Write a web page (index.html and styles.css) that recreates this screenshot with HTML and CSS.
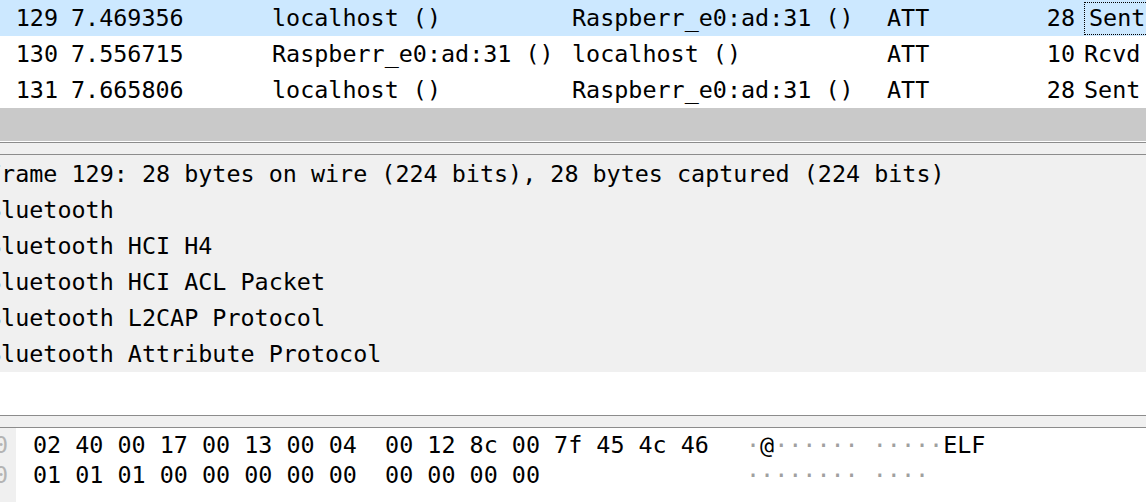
FILE: index.html
```
<!DOCTYPE html>
<html>
<head>
<meta charset="utf-8">
<link rel="stylesheet" href="styles.css">
</head>
<body>
<div class="app">
  <div class="packets">
    <div class="prow selected">
      <span class="c-no">129</span><span class="c-time">7.469356</span><span class="c-src">localhost ()</span><span class="c-dst">Raspberr_e0:ad:31 ()</span><span class="c-proto">ATT</span><span class="c-len">28</span><span class="c-info"><span class="focus">Sent Write Request, Handle: 0x0013</span></span>
    </div>
    <div class="prow">
      <span class="c-no">130</span><span class="c-time">7.556715</span><span class="c-src">Raspberr_e0:ad:31 ()</span><span class="c-dst">localhost ()</span><span class="c-proto">ATT</span><span class="c-len">10</span><span class="c-info">Rcvd Write Response, Handle: 0x0013</span>
    </div>
    <div class="prow">
      <span class="c-no">131</span><span class="c-time">7.665806</span><span class="c-src">localhost ()</span><span class="c-dst">Raspberr_e0:ad:31 ()</span><span class="c-proto">ATT</span><span class="c-len">28</span><span class="c-info">Sent Write Request, Handle: 0x0013</span>
    </div>
  </div>
  <div class="hscroll"></div>
  <div class="splitter"></div>
  <div class="details">
    <div class="drow">Frame 129: 28 bytes on wire (224 bits), 28 bytes captured (224 bits)</div>
    <div class="drow">Bluetooth</div>
    <div class="drow">Bluetooth HCI H4</div>
    <div class="drow">Bluetooth HCI ACL Packet</div>
    <div class="drow">Bluetooth L2CAP Protocol</div>
    <div class="drow">Bluetooth Attribute Protocol</div>
  </div>
  <div class="details-empty"></div>
  <div class="splitter"></div>
  <div class="bytes">
    <div class="gutter">
      <div class="off">0000</div>
      <div class="off">0010</div>
    </div>
    <div class="hexarea">
      <div class="hrow"><span class="hex">02 40 00 17 00 13 00 04  00 12 8c 00 7f 45 4c 46</span><span class="ascii"><span class="np">·</span>@<span class="np">······</span> <span class="np">·····</span>ELF</span></div>
      <div class="hrow"><span class="hex">01 01 01 00 00 00 00 00  00 00 00 00</span><span class="ascii"><span class="np">········</span> <span class="np">····</span></span></div>
    </div>
  </div>
</div>
</body>
</html>
```
FILE: styles.css
```
html, body {
  margin: 0;
  padding: 0;
  background: #ffffff;
}
body {
  width: 1146px;
  height: 502px;
  overflow: hidden;
  font-family: "DejaVu Sans Mono", "Liberation Mono", monospace;
  font-size: 23.4px;
  color: #000000;
}
.app {
  display: flex;
  flex-direction: column;
  width: 1146px;
  height: 502px;
  overflow: hidden;
}
.packets {
  display: flex;
  flex-direction: column;
}
.prow {
  display: grid;
  grid-template-columns: 60px 212px 300px 315px 120px 77px 400px;
  height: 36px;
  line-height: 36px;
  white-space: pre;
  width: 1500px;
}
.prow.selected {
  background: #cce8ff;
}
.c-no {
  text-align: right;
  padding-right: 2px;
}
.c-time {
  padding-left: 11px;
}
.c-len {
  text-align: right;
  padding-right: 9px;
}
.c-info {
  overflow: hidden;
}
.focus {
  display: block;
  margin-top: 2px;
  height: 31px;
  line-height: 31px;
  padding-left: 4px;
  border: 1px dotted #000000;
}
.hscroll {
  height: 33px;
  background: #c9c9c9;
}
.splitter {
  height: 11px;
  margin-top: 1px;
  background: #f0f0f0;
  border-top: 1px solid #8c8c8c;
  border-bottom: 1px solid #8c8c8c;
}
.details {
  background: #f0f0f0;
  display: flex;
  flex-direction: column;
  padding-top: 1px;
}
.drow {
  height: 36px;
  line-height: 36px;
  white-space: pre;
  margin-left: -13px;
}
.details-empty {
  height: 42px;
}
.bytes {
  flex: 1;
  display: flex;
}
.gutter {
  width: 17px;
  background: #f0f0f0;
  overflow: hidden;
  display: flex;
  flex-direction: column;
  align-items: flex-end;
  padding-top: 2px;
}
.off {
  height: 30px;
  line-height: 30px;
  color: #b4b4b4;
  margin-right: 8px;
}
.hexarea {
  display: flex;
  flex-direction: column;
  padding-top: 2px;
  padding-left: 17px;
}
.hrow {
  display: grid;
  grid-template-columns: 713px 400px;
  height: 30px;
  line-height: 30px;
  white-space: pre;
}
.np {
  color: #a0a0a0;
}
```
